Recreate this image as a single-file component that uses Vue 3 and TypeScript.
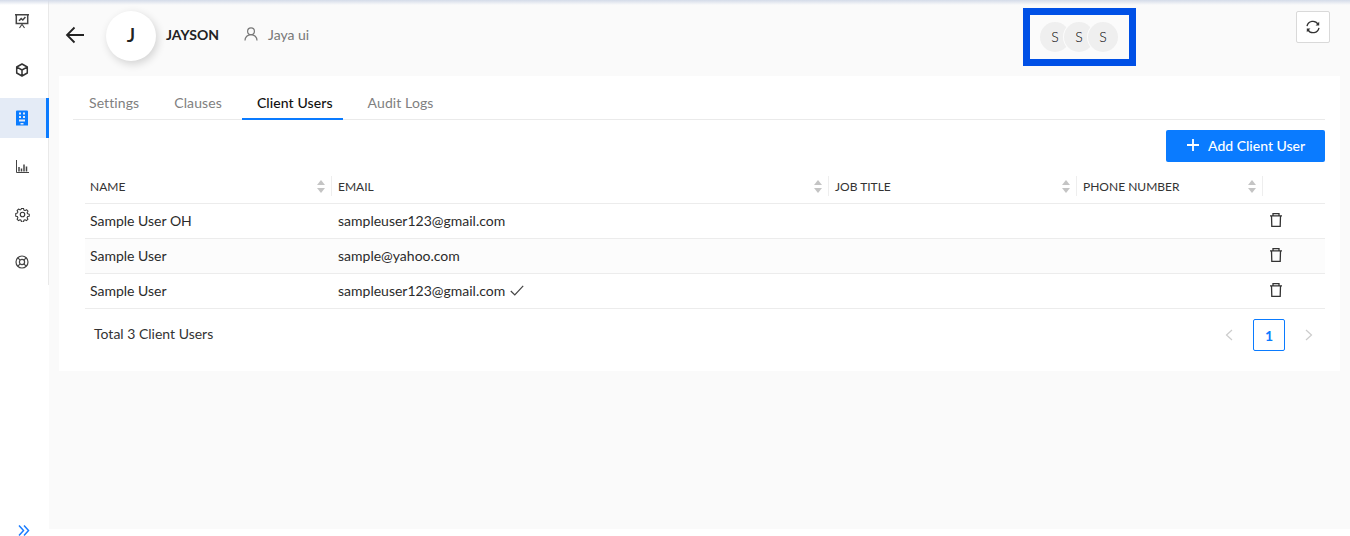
<script setup lang="ts">
interface Row { name: string; email: string; verified: boolean; hover: boolean }
const rows: Row[] = [
  { name: 'Sample User OH', email: 'sampleuser123@gmail.com', verified: false, hover: false },
  { name: 'Sample User', email: 'sample@yahoo.com', verified: false, hover: true },
  { name: 'Sample User', email: 'sampleuser123@gmail.com', verified: true, hover: false },
]
const columns = ['NAME', 'EMAIL', 'JOB TITLE', 'PHONE NUMBER']
const tabs = ['Settings', 'Clauses', 'Client Users', 'Audit Logs']
</script>

<template>
  <div class="app">
    <aside class="side">
      <nav class="nav">
        <a class="item">
          <svg width="16" height="16" viewBox="0 0 16 16" fill="none" stroke="#444" stroke-width="1.500"><path d="M1 1.800h14M2.300 1.800v8.600h11.400V1.800M5 7.800l2.200-2.200 1.600 1.400 2.600-3" /><path stroke-width="1.100" d="M8 10.400v1.600M5.500 15l2-3h1l2 3" /></svg>
        </a>
        <a class="item">
          <svg width="14" height="14" viewBox="0 0 14 14" fill="none" stroke="#333" stroke-width="1.500" stroke-linejoin="round"><path d="M7 1l5.300 3v6L7 13l-5.300-3V4zM1.900 4.200L7 7l5.100-2.800M7 7v5.800" /></svg>
        </a>
        <a class="item active">
          <svg width="12" height="16" viewBox="0 0 12 16"><path fill="#0a7cff" fill-rule="evenodd" d="M1 .5h10a1 1 0 011 1V15.500H0V1.500a1 1 0 011-1zM3 2.500v2h2v-2zm4 0v2h2v-2zM3 6v2h2V6zm4 0v2h2V6zM3 9.500v2h6v-2zm1.500 3.500v1.500h3V13z" /></svg>
        </a>
        <a class="item">
          <svg width="13" height="13" viewBox="0 0 13 13" fill="none" stroke="#444"><path d="M.5 0v12.500H13" /><path stroke-width="1.500" d="M3 11.500V7M5.500 11.500V8.500M8 11.500V4.500M10.500 11.500V6.500" /></svg>
        </a>
        <a class="item">
          <svg width="15" height="15" viewBox="0 0 16 16" fill="none" stroke="#333" stroke-width="1.200" stroke-linejoin="round"><circle cx="8" cy="8" r="2.400" /><path d="M6.800 1h2.400l.4 1.900 1.300.6 1.700-1 1.700 1.700-1 1.700.6 1.300 1.900.4v2.400l-1.900.4-.6 1.300 1 1.700-1.700 1.700-1.700-1-1.300.6-.4 1.900H6.800l-.4-1.900-1.300-.6-1.700 1-1.700-1.700 1-1.700-.6-1.300-1.900-.4V6.800l1.900-.4.600-1.300-1-1.700 1.700-1.700 1.700 1 1.300-.6z" transform="translate(.6 .6) scale(.925)" /></svg>
        </a>
        <a class="item">
          <svg width="14" height="14" viewBox="0 0 14 14" fill="none" stroke="#444" stroke-width="1.200"><circle cx="7" cy="7" r="6" /><circle cx="7" cy="7" r="2.600" /><path d="M2.800 2.800l2.400 2.400M11.200 2.800L8.800 5.200M2.800 11.200l2.400-2.400M11.200 11.200L8.800 8.800" /></svg>
        </a>
      </nav>
      <div class="expand">
        <svg width="12" height="11" viewBox="0 0 12 11" fill="none" stroke="#1a7dff" stroke-width="1.500"><path d="M1 .5l4.500 5L1 10.500M6 .5l4.500 5-4.500 5" /></svg>
      </div>
    </aside>

    <main class="main">
      <header class="head">
        <button class="back" aria-label="Back">
          <svg width="20" height="18" viewBox="0 0 20 18" fill="none" stroke="#222" stroke-width="1.800"><path d="M19 9H2M9.500 1.500L2 9l7.500 7.500" /></svg>
        </button>
        <div class="avatar">J</div>
        <strong class="client">JAYSON</strong>
        <svg class="user-ic" width="14" height="14" viewBox="0 0 14 14" fill="none" stroke="#777" stroke-width="1.200"><circle cx="7" cy="4.200" r="3.400" /><path d="M1 13.500c0-3.400 2.600-5.900 6-5.900s6 2.500 6 5.900" /></svg>
        <span class="owner">Jaya ui</span>
        <div class="marked">
          <span class="dot">S</span><span class="dot">S</span><span class="dot">S</span>
        </div>
        <button class="refresh" aria-label="Refresh">
          <svg width="14" height="14" viewBox="0 0 14 14" fill="none" stroke="#333" stroke-width="1.300"><path d="M1 6.200A6 6 0 0 1 12 4.200M13 7.800A6 6 0 0 1 2 9.800" /><path fill="#333" stroke="none" d="M13.200 1.800v3.600H9.600zM.8 12.200V8.600h3.600z" /></svg>
        </button>
      </header>

      <section class="card">
        <div class="tabs">
          <div v-for="t in tabs" :key="t" class="tab" :class="{ on: t === 'Client Users' }">{{ t }}</div>
        </div>
        <div class="tools">
          <button class="add">
            <svg width="12" height="12" viewBox="0 0 12 12" stroke="#fff" stroke-width="1.800"><path d="M6 0v12M0 6h12" /></svg>
            Add Client User
          </button>
        </div>
        <table class="tbl">
          <colgroup>
            <col style="width:247px" /><col style="width:497px" /><col style="width:248px" /><col style="width:186px" /><col />
          </colgroup>
          <thead>
            <tr>
              <th v-for="c in columns" :key="c">
                <div class="th">
                  <span>{{ c }}</span>
                  <span class="sort"><i class="up"></i><i class="down"></i></span>
                </div>
              </th>
              <th></th>
            </tr>
          </thead>
          <tbody>
            <tr v-for="(r, i) in rows" :key="i" :class="{ hover: r.hover }">
              <td>{{ r.name }}</td>
              <td>
                {{ r.email }}
                <svg v-if="r.verified" class="check" width="14" height="11" viewBox="0 0 14 11" fill="none" stroke="#444" stroke-width="1.200"><path d="M.8 6l4 4L13.200.8" /></svg>
              </td>
              <td></td>
              <td></td>
              <td class="act">
                <svg width="12" height="14" viewBox="0 0 12 14" fill="none" stroke="#333" stroke-width="1.300"><path d="M0 2.800h12M3 2.500V.7h6v1.800M1.500 3l.3 10.300h8.400L10.500 3" /></svg>
              </td>
            </tr>
          </tbody>
        </table>
        <footer class="foot">
          <span class="total">Total 3 Client Users</span>
          <div class="pager">
            <svg width="8" height="12" viewBox="0 0 8 12" fill="none" stroke="#ccc" stroke-width="1.200"><path d="M7 1L1.500 6 7 11" /></svg>
            <span class="page">1</span>
            <svg width="8" height="12" viewBox="0 0 8 12" fill="none" stroke="#ccc" stroke-width="1.200"><path d="M1 1l5.500 5L1 11" /></svg>
          </div>
        </footer>
      </section>
    </main>
  </div>
</template>

<style>
html, body { margin: 0; padding: 0; background: #fff; overflow: hidden; }
</style>

<style scoped>
.app {
  position: relative;
  display: flex;
  width: 1350px;
  height: 536px;
  overflow: hidden;
  background: #fff;
  font-family: Lato, "Liberation Sans", sans-serif;
  color: #262626;
}
.app::before {
  content: "";
  position: absolute;
  inset: 0 0 auto 0;
  height: 5px;
  background: linear-gradient(#d4dbe9, rgba(235, 238, 245, 0));
}
.side {
  width: 49px;
  flex: none;
  display: flex;
  flex-direction: column;
  justify-content: space-between;
}
.nav {
  height: 285px;
  box-sizing: border-box;
  border-right: 1px solid #e9e9e9;
}
.item {
  display: flex;
  align-items: center;
  justify-content: center;
  height: 48px;
  box-sizing: border-box;
  padding-right: 4px;
}
.item:first-child { height: 42px; margin-bottom: 4px; }
.item.active {
  height: 40px;
  margin: 4px -1px 4px 0;
  background: #e4ebf6;
  border-right: 3px solid #0a7bff;
  padding-right: 3px;
}
.expand { padding-left: 18px; height: 11px; line-height: 0; }
.main {
  flex: none;
  width: 1301px;
  height: 529px;
  background: #fafafa;
  padding: 3px 10px 0;
  box-sizing: border-box;
}
.head {
  display: flex;
  align-items: center;
  height: 73px;
}
.back {
  border: 0;
  background: none;
  padding: 0;
  margin: 0 0 9px 6px;
  width: 20px;
  height: 18px;
  line-height: 0;
}
.avatar {
  width: 50px;
  height: 50px;
  margin: 0 10px 7px 21px;
  border-radius: 50%;
  background: #fff;
  box-shadow: 2px 3px 8px rgba(0, 0, 0, .16);
  display: flex;
  align-items: center;
  justify-content: center;
  font-size: 20px;
  font-weight: 600;
  padding-bottom: 5px;
  box-sizing: border-box;
  color: #222;
}
.client { font-size: 14px; font-weight: 700; color: #222; margin-bottom: 11px; width: 78px; }
.user-ic { margin: 0 10px 11px 0; }
.owner { font-size: 14px; color: #777; margin-bottom: 11px; width: 44px; }
.marked {
  display: flex;
  align-items: center;
  box-sizing: border-box;
  width: 113px;
  height: 58px;
  margin: -6px 0 0 711px;
  border: 7px solid #0050e6;
  padding-left: 10px;
  background: #fbfbfb;
}
.dot {
  width: 30px;
  height: 30px;
  border-radius: 50%;
  background: #efefef;
  box-shadow: 0 0 0 1px #fbfbfb;
  display: flex;
  align-items: center;
  justify-content: center;
  font-size: 14px;
  font-weight: 300;
  color: #000;
  margin-right: -6px;
}
.refresh {
  width: 34px;
  height: 32px;
  margin: 0 0 25px 160px;
  padding: 0;
  background: #fff;
  border: 1px solid #d9d9d9;
  border-radius: 2px;
  display: flex;
  align-items: center;
  justify-content: center;
}
.card {
  width: 1281px;
  height: 295px;
  background: #fff;
  box-sizing: border-box;
  padding: 0 15px 0 14px;
}
.tabs {
  display: flex;
  gap: 10px;
  height: 44px;
  border-bottom: 1px solid #eaeaea;
  padding-left: 1px;
  box-sizing: border-box;
}
.tab {
  padding: 18px 10px 0 15px;
  font-size: 14px;
  letter-spacing: .1px;
  line-height: 17px;
  color: #808080;
  height: 44px;
  box-sizing: border-box;
}
.tab.on { color: #111; font-weight: 500; border-bottom: 2px solid #0a7bff; }
.tools { display: flex; justify-content: flex-end; padding-top: 10px; }
.add {
  width: 159px;
  height: 32px;
  background: #0a7bff;
  color: #fff;
  border: 0;
  border-radius: 2px;
  font: 500 14px Lato, "Liberation Sans", sans-serif;
  display: flex;
  align-items: center;
  gap: 9px;
  padding: 0 0 2px 21px;
}
.tbl {
  width: 1240px;
  margin: 7px 0 0 12px;
  border-collapse: collapse;
  table-layout: fixed;
  font-size: 14px;
}
th {
  height: 34px;
  padding: 0;
  border-bottom: 1px solid #ececec;
  font-weight: 400;
  font-size: 12px;
  text-align: left;
  color: #333;
}
.th {
  height: 20px;
  display: flex;
  align-items: center;
  justify-content: space-between;
  padding: 0 6px 0 6px;
  border-right: 1px solid #eeeeee;
}
th:first-child .th { padding-left: 5px; }
.sort { display: flex; flex-direction: column; gap: 3px; }
.sort i { display: block; width: 0; height: 0; border-left: 4.500px solid transparent; border-right: 4.500px solid transparent; }
.sort .up { border-bottom: 5px solid #c4c4c4; }
.sort .down { border-top: 5px solid #c4c4c4; }
td {
  height: 35px;
  padding: 0 0 2px 6px;
  box-sizing: border-box;
  border-bottom: 1px solid #ececec;
  color: #2b2b2b;
}
td:first-child { padding-left: 5px; }
tr.hover td { background: #fcfcfc; }
td.act { padding-left: 7px; line-height: 0; }
.check { margin-left: 1px; vertical-align: 0; }
.foot {
  display: flex;
  justify-content: space-between;
  align-items: center;
  margin-top: 10px;
  padding-left: 21px;
}
.total { font-size: 14px; color: #333; margin-bottom: 4px; }
.pager { display: flex; align-items: center; gap: 20px; padding-right: 12px; }
.page {
  width: 32px;
  height: 32px;
  box-sizing: border-box;
  border: 1px solid #0a7bff;
  border-radius: 2px;
  display: flex;
  align-items: center;
  justify-content: center;
  color: #0a7bff;
  font-size: 14px;
  font-weight: 700;
}
</style>
